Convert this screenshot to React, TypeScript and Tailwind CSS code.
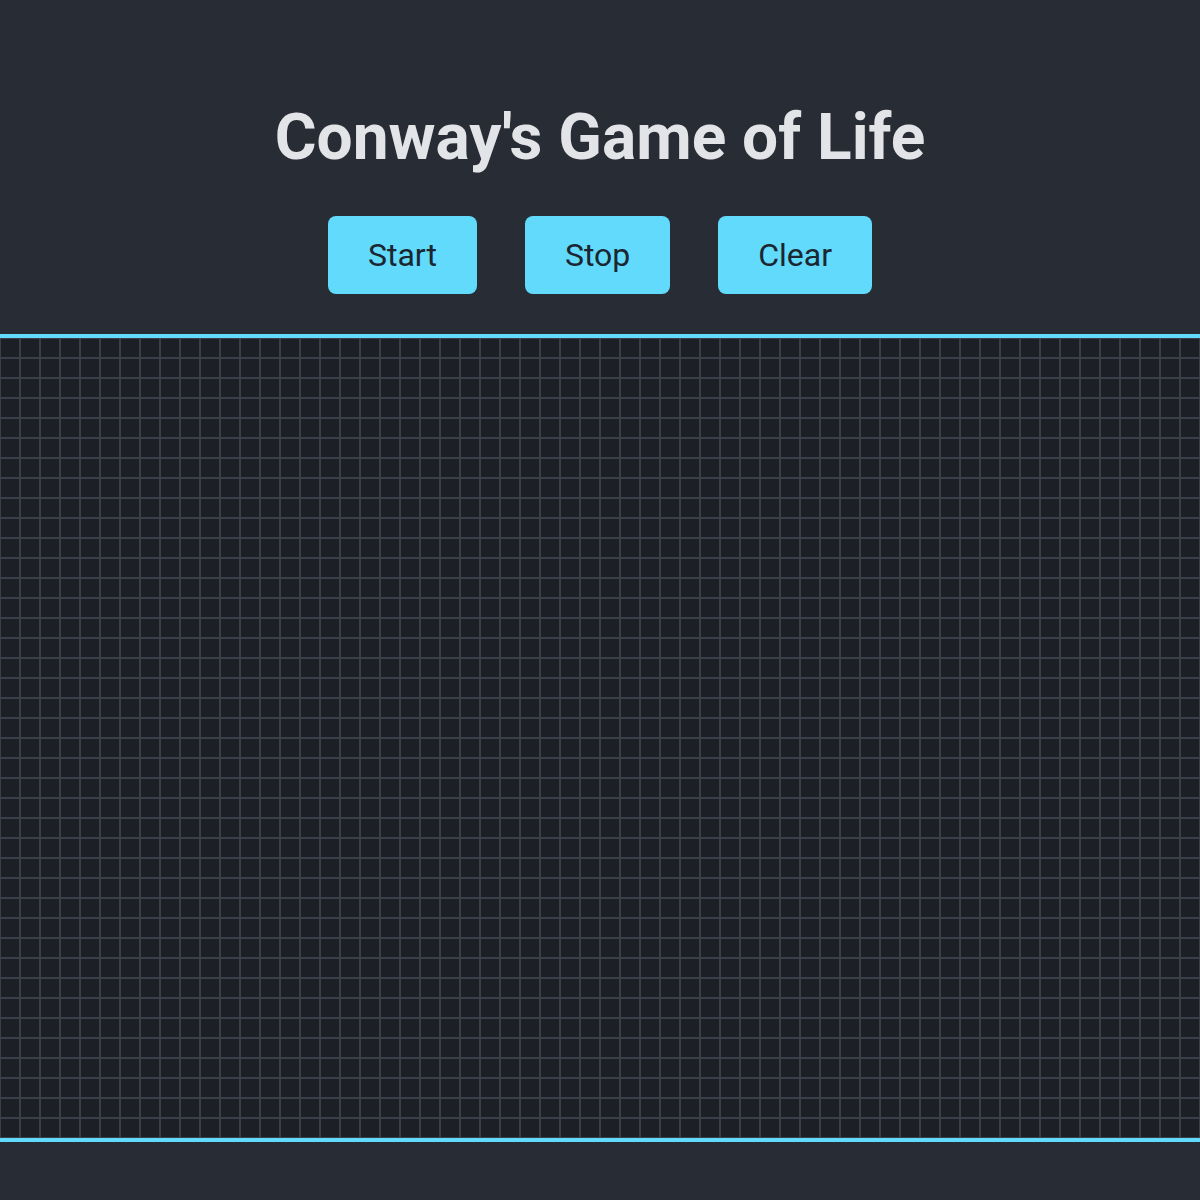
import { useState } from 'react';

const ROWS = 40;
const COLS = 60;

function emptyGrid(): boolean[][] {
  return Array.from({ length: ROWS }, () => Array.from({ length: COLS }, () => false));
}

export default function App() {
  const [grid, setGrid] = useState<boolean[][]>(emptyGrid);

  function toggle(r: number, c: number) {
    setGrid((g) => g.map((row, i) => (i === r ? row.map((v, j) => (j === c ? !v : v)) : row)));
  }

  return (
    <div
      className="min-h-screen bg-[#282c34] flex flex-col items-center"
      style={{ fontFamily: 'Roboto, "Liberation Sans", sans-serif' }}
    >
      <h1 className="pt-[100px] text-[64px] leading-[76px] font-bold text-[#e3e4e8]">
        Conway's Game of Life
      </h1>

      <div className="mt-[40px] flex gap-[48px]">
        <button className="h-[78px] px-[40px] rounded-lg bg-[#61dafb] text-[#1b2631] text-[32px]">
          Start
        </button>
        <button className="h-[78px] px-[40px] rounded-lg bg-[#61dafb] text-[#1b2631] text-[32px]">
          Stop
        </button>
        <button className="h-[78px] px-[40px] rounded-lg bg-[#61dafb] text-[#1b2631] text-[32px]">
          Clear
        </button>
      </div>

      <div className="mt-[40px] w-full border-y-4 border-[#61dafb] grid grid-cols-[repeat(60,20px)]">
        {grid.map((row, r) =>
          row.map((alive, c) => (
            <div
              key={`${r}-${c}`}
              onClick={() => toggle(r, c)}
              className={
                alive
                  ? 'h-[20px] w-[20px] border border-[#3a3e48] bg-[#61dafb]'
                  : 'h-[20px] w-[20px] border border-[#3a3e48] bg-[#1d1f27]'
              }
            />
          ))
        )}
      </div>
    </div>
  );
}
